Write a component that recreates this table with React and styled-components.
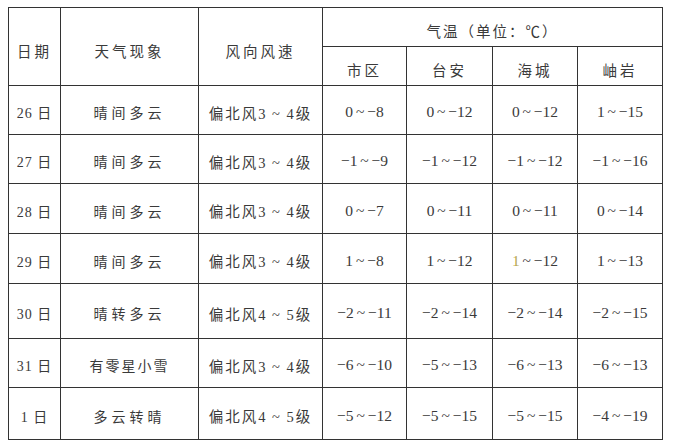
import React from 'react';
import styled, { createGlobalStyle } from 'styled-components';

const GlobalStyle = createGlobalStyle`
  html, body {
    margin: 0;
    padding: 0;
    background: #ffffff;
  }
`;

const Page = styled.div`
  width: 683px;
  height: 448px;
  padding: 7px 0 0 8px;
  box-sizing: border-box;
  background: #ffffff;
  font-family: "Liberation Serif", "Noto Sans CJK SC", serif;
  color: #3a3a3a;
`;

const Table = styled.table`
  border-collapse: collapse;
  table-layout: fixed;
  width: 654px;
  border: 1.5px solid #3c3c3c;
`;

const Cell = styled.td`
  border: 1px solid #333;
  text-align: center;
  vertical-align: middle;
  padding: 4px 0 0 0;
  font-size: 14px;
  font-weight: 400;
  letter-spacing: ${p => p.$spacing ?? 3}px;
  white-space: nowrap;
  overflow: hidden;
`;

const HeadCell = styled(Cell).attrs({ as: 'th' })`
  font-weight: 400;
  font-size: 14.5px;
  padding-top: ${p => p.$pt || 6}px;
`;

const NumCell = styled(Cell)`
  font-size: 15.5px;
  letter-spacing: 0;
  word-spacing: -1px;
`;

const WindCell = styled(Cell)`
  font-size: 14.5px;
  letter-spacing: 2px;
  word-spacing: -1px;
`;

const Row = styled.tr`
  height: ${p => p.$h}px;
`;

const Dim = styled.span`
  color: #b6a64e;
`;

const widths = [52, 138, 124, 84, 86, 85, 85];

const rows = [
  { d: '26', w: '晴间多云', f: '3 ~ 4', t: ['0 ~ −8', '0 ~ −12', '0 ~ −12', '1 ~ −15'], h: 49 },
  { d: '27', w: '晴间多云', f: '3 ~ 4', t: ['−1 ~ −9', '−1 ~ −12', '−1 ~ −12', '−1 ~ −16'], h: 49 },
  { d: '28', w: '晴间多云', f: '3 ~ 4', t: ['0 ~ −7', '0 ~ −11', '0 ~ −11', '0 ~ −14'], h: 50 },
  { d: '29', w: '晴间多云', f: '3 ~ 4', t: ['1 ~ −8', '1 ~ −12', 'dim', '1 ~ −13'], h: 50 },
  { d: '30', w: '晴转多云', f: '4 ~ 5', t: ['−2 ~ −11', '−2 ~ −14', '−2 ~ −14', '−2 ~ −15'], h: 55 },
  { d: '31', w: '有零星小雪', f: '3 ~ 4', t: ['−6 ~ −10', '−5 ~ −13', '−6 ~ −13', '−6 ~ −13'], h: 49 },
  { d: '1', w: '多云转晴', f: '4 ~ 5', t: ['−5 ~ −12', '−5 ~ −15', '−5 ~ −15', '−4 ~ −19'], h: 52 },
];

export default function App() {
  return (
    <>
      <GlobalStyle />
      <Page>
        <Table>
          <colgroup>
            {widths.map((w, i) => <col key={i} style={{ width: w }} />)}
          </colgroup>
          <thead>
            <Row $h={39}>
              <HeadCell rowSpan={2} $pt={8}>日期</HeadCell>
              <HeadCell rowSpan={2} $pt={8}>天气现象</HeadCell>
              <HeadCell rowSpan={2} $pt={8}>风向风速</HeadCell>
              <HeadCell colSpan={4} $spacing={2}>气温（单位：℃）</HeadCell>
            </Row>
            <Row $h={39}>
              <HeadCell>市区</HeadCell>
              <HeadCell>台安</HeadCell>
              <HeadCell>海城</HeadCell>
              <HeadCell>岫岩</HeadCell>
            </Row>
          </thead>
          <tbody>
            {rows.map(r => (
              <Row key={r.d} $h={r.h}>
                <Cell $spacing={1}>{r.d} 日</Cell>
                <Cell $spacing={r.w.length > 4 ? 2 : 4}>{r.w}</Cell>
                <WindCell>偏北风{r.f}级</WindCell>
                {r.t.map((t, i) => (
                  <NumCell key={i}>
                    {t === 'dim' ? <><Dim>1</Dim> ~ −12</> : t}
                  </NumCell>
                ))}
              </Row>
            ))}
          </tbody>
        </Table>
      </Page>
    </>
  );
}
